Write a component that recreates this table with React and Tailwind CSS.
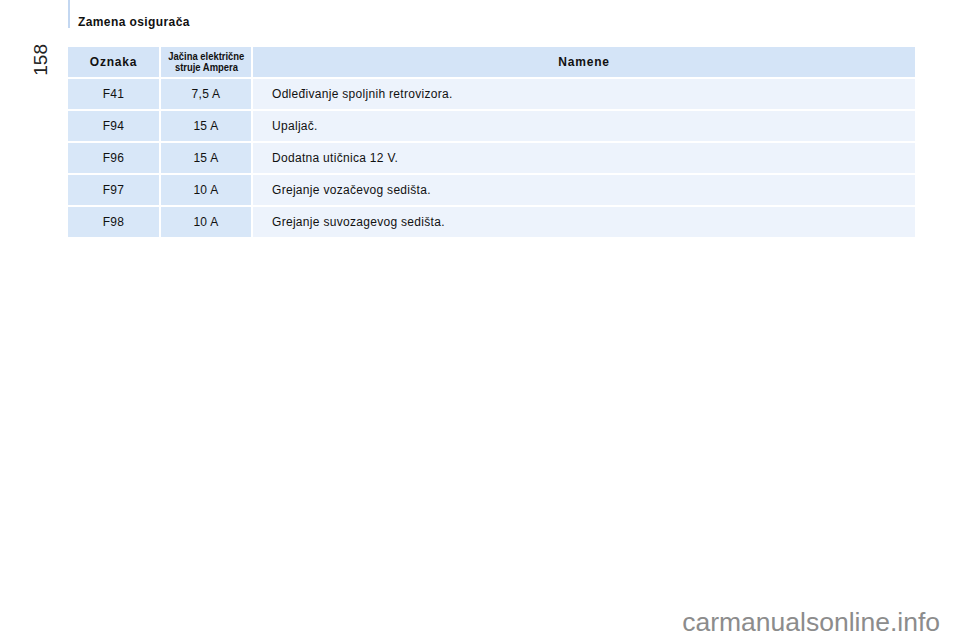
const rows = [
  { code: "F41", amp: "7,5 A", desc: "Odleđivanje spoljnih retrovizora." },
  { code: "F94", amp: "15 A", desc: "Upaljač." },
  { code: "F96", amp: "15 A", desc: "Dodatna utičnica 12 V." },
  { code: "F97", amp: "10 A", desc: "Grejanje vozačevog sedišta." },
  { code: "F98", amp: "10 A", desc: "Grejanje suvozagevog sedišta." },
];

export default function App() {
  return (
    <div className="w-[960px] h-[640px] bg-white flex flex-col font-['Liberation_Sans',Arial,sans-serif] text-[#111]">
      <div className="flex items-start">
        <div className="w-[68px] flex justify-center items-start pt-[44px] pl-[12px]">
          <span className="text-[19px] leading-none text-[#222] [writing-mode:vertical-rl] rotate-180">
            158
          </span>
        </div>
        <div className="flex flex-col">
          <div className="h-[28px] border-l-2 border-[#c3d7f1] pl-[8px] pt-[15px] text-[12px] font-bold leading-[14px] tracking-[0.4px]">
            Zamena osigurača
          </div>
          <div className="mt-[19px] w-[847px] grid grid-cols-[91px_90px_1fr] gap-[2px] text-[12px] tracking-[0.3px]">
            <div className="h-[30px] bg-[#d4e4f7] flex items-center justify-center font-bold tracking-[0.8px]">
              Oznaka
            </div>
            <div className="h-[30px] bg-[#d4e4f7] flex flex-col items-center justify-center font-bold text-[11.5px] leading-[11px] tracking-normal">
              <span className="block scale-x-[0.82] whitespace-nowrap">Jačina električne</span>
              <span className="block scale-x-[0.82] whitespace-nowrap">struje Ampera</span>
            </div>
            <div className="h-[30px] bg-[#d4e4f7] flex items-center justify-center font-bold tracking-[0.8px]">
              Namene
            </div>
            {rows.map((r) => (
              <div key={r.code} className="contents">
                <div className="h-[30px] bg-[#d8e7f8] flex items-center justify-center">
                  {r.code}
                </div>
                <div className="h-[30px] bg-[#d8e7f8] flex items-center justify-center">
                  {r.amp}
                </div>
                <div className="h-[30px] bg-[#edf3fc] flex items-center pl-[19px]">
                  {r.desc}
                </div>
              </div>
            ))}
          </div>
        </div>
      </div>
      <div className="flex-1" />
      <div className="flex justify-end pr-[20px] pb-[2px]">
        <span className="text-[26.5px] leading-[32px] text-[#8c8c8c]">
          carmanualsonline.info
        </span>
      </div>
    </div>
  );
}
